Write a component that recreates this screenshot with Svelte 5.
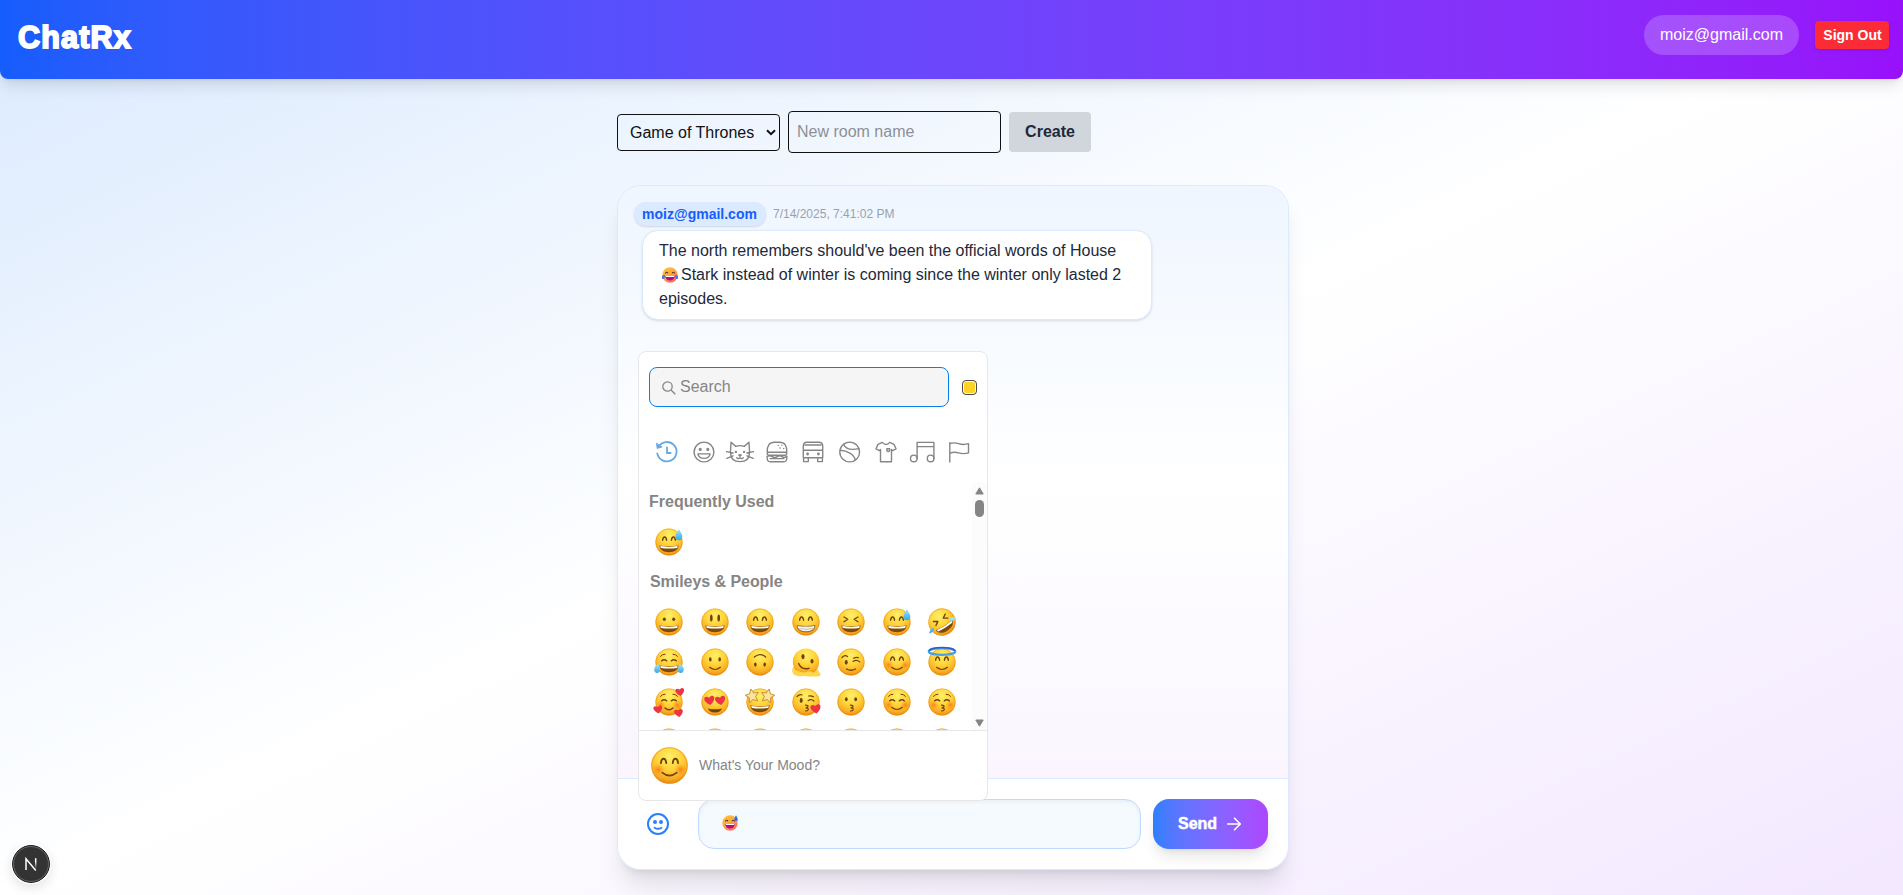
<script>
  const B = '#70410a';
  const line = (d, w = 1.5, c = B) => `<path d="${d}" fill="none" stroke="${c}" stroke-width="${w}" stroke-linecap="round" stroke-linejoin="round"/>`;
  const dots = (y, rx = 1.4, ry = 2.1, x = 4.7) => `<ellipse cx="${-x}" cy="${y}" rx="${rx}" ry="${ry}" fill="${B}"/><ellipse cx="${x}" cy="${y}" rx="${rx}" ry="${ry}" fill="${B}"/>`;
  const face = '<circle r="13.6" fill="url(#face)"/><circle r="13.2" fill="none" stroke="#e58a0b" stroke-opacity=".5" stroke-width=".9"/>';
  const grin = `<path d="M-9.6 3.6Q0 5.4 9.6 3.6C9.2 8 5.6 10.2 0 10.2S-9.2 8-9.6 3.6Z" fill="#7d4a0c"/><path d="M-8.8 4.1Q0 5.7 8.8 4.1L8.2 6Q0 7.1-8.2 6Z" fill="#fff"/>`;
  const beam = `<path d="M-9.4 3.2Q0 4.8 9.4 3.2C9.2 7.8 5.8 10.2 0 10.2S-9.2 7.8-9.4 3.2Z" fill="#8a5a18"/><path d="M-8.5 3.9Q0 5.3 8.5 3.9C8.2 7.2 5 9.2 0 9.2S-8.2 7.2-8.5 3.9Z" fill="#f4f4ee"/><path d="M-7.6 6.6Q0 8 7.6 6.6" stroke="#b9b09a" stroke-width=".8" fill="none"/>`;
  const arcs = line('M-6.4-1.8Q-6-5-4.4-5T-2.4-1.8M2.4-1.8Q2.8-5 4.4-5T6.4-1.8', 1.4);
  const closed = line('M-7.5-1.1Q-4.8-3.5-2.2-1.1M2.2-1.1Q4.8-3.5 7.5-1.1', 1.3);
  const brows = line('M-8.5-5.7Q-6.7-7.9-4-7.8M8.5-5.7Q6.7-7.9 4-7.8', 1);
  const smile = line('M-5.4 5.3Q0 9.7 5.4 5.3', 1.2);
  const blush = '<circle cx="-8.2" cy="3" r="4.7" fill="url(#blush)"/><circle cx="8.2" cy="3" r="4.7" fill="url(#blush)"/>';
  const drop = '<path d="M9.9-13C8.6-10 6.4-8 6.4-5.3A3.5 3.5 0 0 0 13.4-5.3C13.4-8 11.2-10 9.9-13Z" fill="url(#water)"/>';
  const heart = (x, y, s = 1) => `<path transform="translate(${x} ${y}) scale(${s}) rotate(-9)" d="M0 4.2C-8-1-4-6.4 0-2.6C4-6.4 8-1 0 4.2Z" fill="#ed3447"/>`;
  const kiss = line('M-.5 3.2Q3 3.5 1.6 5Q.8 5.8 0 5.8Q3 6 2 8Q1.2 9.1-.5 9', 1.2);
  const star = (x) => `<path transform="translate(${x} -6.2) rotate(${x < 0 ? -12 : 12}) scale(1.12)" d="M0-6.2L1.8-2.2L6-1.7L2.9 1.2L3.8 5.5L0 3.4L-3.8 5.5L-2.9 1.2L-6-1.7L-1.8-2.2Z" fill="#fbe3a0" stroke="#c38c32" stroke-width=".8" stroke-linejoin="round"/>`;

  const art = {
    grinning: face + dots(-2.8, 1.5, 1.8) + grin,
    smiley: face + dots(-3.9, 1.3, 3.5, 3.7) + grin,
    smile: face + arcs + grin,
    beaming: face + arcs + beam,
    laughing: face + line('M-7-5L-3.2-2.7L-7-.2M7-5L3.2-2.7L7-.2', 1.3) + grin,
    sweat: face + arcs + grin + drop,
    rofl: `<g transform="rotate(-32)">${face}${line('M-7-5L-3.2-2.7L-7-.2M7-5L3.2-2.7L7-.2', 1.4)}${grin}</g><path d="M15-4Q9-6 6.6-2.2Q10 .7 15-4ZM-12.8 11.5Q-12 6.2-8 5.5Q-7.4 10.2-12.8 11.5Z" fill="url(#water)"/>`,
    joy: face + brows + closed + grin + '<path d="M-10.6 2C-16 4-16 10.8-11.8 11C-8.5 11-8.2 6.6-10.6 2ZM10.6 2C16 4 16 10.8 11.8 11C8.5 11 8.2 6.6 10.6 2Z" fill="url(#water)"/>',
    slight: face + dots(-2.6, 1.3, 2.1) + smile,
    upside: `${face}<g transform="rotate(180)">${dots(-2.6, 1.3, 2.1)}${line('M-5.7 5Q0 9.7 5.7 5', 1.2)}</g>`,
    melting: '<path d="M-13 5C-16 12-10 14-5 12.5C-1 15 8 14.8 13 14.3C17 13 12 10 11.7 7Z" fill="#ffd54b"/><circle r="13.2" cy="-.3" fill="url(#face)"/><path d="M-13 8C-9 7-6 12 1 10C6 8 8 13 15 11.8C12 15 3 13-2 14C-7 15-15 14-13 8Z" fill="#ffd64c"/>' + '<ellipse cx="-3" cy="-5.4" rx="1.6" ry="2.6" fill="#70410a"/><ellipse cx="6" cy="-.7" rx="1.5" ry="2.3" fill="#70410a"/>' + line('M-7.4 1.6Q-4.6 8.4 3 6.3', 1.4),
    wink: face + '<ellipse cx="-4.8" cy=".3" rx="1.5" ry="2.4" fill="#70410a"/>' + line('M-9-4.5Q-6-7.8-3.4-5.4M2-.6Q5.7-2.8 8.7-.1M2.6-3.7Q5-5.1 7.6-4.3', 1.2) + line('M-4.4 7Q0 9.6 4.4 7', 1.4),
    blush: face + blush + arcs + smile,
    halo: face + arcs + smile + '<ellipse cy="-10.5" rx="13.2" ry="3.3" fill="none" stroke="#459fe6" stroke-width="2.2"/><path d="M-13-11.2C-10-15.6 10-15.6 13-11.2" fill="none" stroke="#3456cf" stroke-width="1.3"/>',
    hearts: face + blush + brows + closed + line('M-4 6Q0 9.5 4 6', 1.4) + heart(11, -10, .95) + heart(-11, 7.6, .95) + heart(9.7, 11, .95),
    heartEyes: face + '<path d="M-7 6.4Q0 8.3 7 6.4Q5.5 10.5 0 10.5T-7 6.4Z" fill="#70410a"/>' + heart(-5.4, -1.5, 1.1) + heart(5.4, -1.5, 1.1),
    starEyes: face + grin + star(-7.8) + star(7.8),
    kissHeart: face + '<ellipse cx="-4.8" cy="-1.5" rx="1.5" ry="2.4" fill="#70410a"/>' + line('M-9-5.5Q-6.5-8-4-7M2.1-1.3Q5-3.6 8-1M2.6-6Q5-6.6 7.5-5.2', 1.2) + kiss + heart(9.8, 6.9, 1.1),
    kissing: face + dots(-2.8, 1.4, 2) + kiss,
    relaxed: face + blush + brows + closed + smile,
    kissClosed: face + blush + brows + closed + kiss,
    plain: face
  };

  const rows = [
    ['grinning', 'smiley', 'smile', 'beaming', 'laughing', 'sweat', 'rofl'],
    ['joy', 'slight', 'upside', 'melting', 'wink', 'blush', 'halo'],
    ['hearts', 'heartEyes', 'starEyes', 'kissHeart', 'kissing', 'relaxed', 'kissClosed'],
    ['plain', 'plain', 'plain', 'plain', 'plain', 'plain', 'plain']
  ];

  const categories = [
    '<path d="M5.6 8.6A9.7 9.7 0 1 1 4.3 15.4M14 9.3V15H17.6"/><path d="M3.6 5.6L4.2 10.4L8.8 9Z" fill="#68a9e2" stroke-width="1"/>',
    '<circle cx="14" cy="14" r="9.9"/><circle cx="10.2" cy="11.4" r=".9"/><circle cx="17.8" cy="11.4" r=".9"/><path d="M7.9 15.9H20.1Q19.3 20.4 14 20.4T7.9 15.9Z"/>',
    '<path d="M4.4 14.2L5.1 4.3L9.8 8.4Q14 6.8 18.2 8.4L22.9 4.3L23.6 14.2Q23.5 23.6 14 23.6T4.4 14.2ZM.5 13.6L7 15M.8 20.3L7 17.8M27.5 13.6L21 15M27.2 20.3L21 17.8M10.8 19.8Q12.4 21.4 14 19.8Q15.6 21.4 17.2 19.8"/><path d="M12.8 17H15.2L14 18.3Z"/><circle cx="9.9" cy="13.9" r=".5"/><circle cx="18.1" cy="13.9" r=".5"/>',
    '<path d="M4.2 14.2Q4 4.2 11.4 4.2H16.8Q24 4.2 23.8 14.2ZM5.2 14.4Q3.2 15.8 5.2 17.2H22.8Q24.8 15.8 22.8 14.4M4 18.4Q6.8 17 9.3 18.6T14.2 18.6T19 18.6T24 18.4M4.2 19.2Q3.7 23.8 7.5 23.8H20.5Q24.3 23.8 23.8 19.2M7 20.6H21"/><path d="M15.3 7.3h.2M18.8 7.2h.2M17 10h.2M20.6 10.4h.2" stroke-width="1.3"/>',
    '<path d="M4.3 19.7V8Q4.3 4.2 8 4.2H20Q23.7 4.2 23.7 8V19.7ZM4.3 12.2H23.7M6 7H22M4.6 19.7V23.6H9.3V19.7M18.7 19.7V23.6H23.4V19.7"/><circle cx="8.6" cy="16" r=".7"/><circle cx="19.4" cy="16" r=".7"/>',
    '<circle cx="13.7" cy="14" r="9.9"/><path d="M7.5 6.3C10 11.8 16.4 12.1 22.8 10.6M4.3 12.3C11 12.8 18 16 19.3 22"/>',
    '<path d="M10.3 4.4L6 6.4L4 10.8L7.3 12.6L8.5 11.4V23.7H19.5V11.4L20.7 12.6L24 10.8L22 6.4L17.7 4.4Q14 8.6 10.3 4.4ZM14.9 10.7H17.6V12.8L16.3 13.6L14.9 12.8Z"/>',
    '<circle cx="4.8" cy="20.4" r="3.3"/><circle cx="21.6" cy="20.4" r="3.3"/><path d="M8.1 20.4V4.4H24.9V20.4M8.1 8.6H24.9"/>',
    '<path d="M4.8 24V4.8M4.8 5.5Q9.2 4.1 13.7 5.7T23.5 5.7V14.9Q18.2 16.4 13.7 14.9T4.8 15.3"/>'
  ];
</script>

{#snippet emoji(name, size)}
  <svg class="emoji" width={size} height={size} viewBox="-16 -16 32 32">{@html art[name]}</svg>
{/snippet}

{#snippet textEmoji(kind)}
  <svg class="text-emoji" width="16" height="16" viewBox="-8 -8 16 16">
    <circle r="7.7" fill="url(#warm)" />
    <path d="M-4.8-1.5Q-3.5-3.8-2-1.7M2-1.7Q3.5-3.8 4.8-1.5" fill="none" stroke="#53333b" stroke-width="1.1" />
    <path d="M-4.9 1H4.9Q4 5.5 0 5.5T-4.9 1Z" fill="#b60b80" />
    <path d="M-4.5 1H4.5L4 2H-4Z" fill="#fff" />
    {#if kind === 'joy'}
      <path d="M-5-.1C-10-.2-8.6 5-6.3 3.9Q-4.8 3-5-.1ZM5-.1C10-.2 8.6 5 6.3 3.9Q4.8 3 5-.1Z" fill="#4778e6" />
    {:else}
      <path d="M6-7.8Q3.8-4.5 4.3-3.2A1.8 1.8 0 0 0 7.8-3.2Q8-4.5 6-7.8Z" fill="#3769e8" />
    {/if}
  </svg>
{/snippet}

<svg class="defs" width="0" height="0">
  <defs>
    <radialGradient id="face" cx=".5" cy=".26" r=".77">
      <stop offset="0" stop-color="#fff06a" /><stop offset=".45" stop-color="#ffd43a" />
      <stop offset=".78" stop-color="#f9ae24" /><stop offset="1" stop-color="#e57f0a" />
    </radialGradient>
    <radialGradient id="blush"><stop stop-color="#fa5d12" stop-opacity=".65" /><stop offset="1" stop-color="#fb8b12" stop-opacity="0" /></radialGradient>
    <linearGradient id="water" x2="0" y2="1"><stop stop-color="#a5e6fb" /><stop offset="1" stop-color="#36a9e5" /></linearGradient>
    <linearGradient id="warm" x2=".6" y2="1"><stop stop-color="#ffc83d" /><stop offset=".6" stop-color="#ffa33d" /><stop offset="1" stop-color="#f8686a" /></linearGradient>
  </defs>
</svg>

<div class="page">
  <header>
    <h1>ChatRx</h1>
    <div class="account">
      <span class="user">moiz@gmail.com</span>
      <button class="signout">Sign Out</button>
    </div>
  </header>

  <main>
    <div class="rooms">
      <div class="select">
        <span>Game of Thrones</span>
        <svg width="10" height="7" viewBox="0 0 10 7"><path d="M1 1.2L5 5.2L9 1.2" fill="none" stroke="#111" stroke-width="2" /></svg>
      </div>
      <input class="room-name" placeholder="New room name" />
      <button class="create">Create</button>
    </div>

    <section class="card">
      <div class="messages">
        <div class="meta"><span class="author">moiz@gmail.com</span><time>7/14/2025, 7:41:02 PM</time></div>
        <div class="bubble">
          The north remembers should've been the official words of House<br />
          <span class="inline">{@render textEmoji('joy')}</span>Stark instead of winter is coming since the winter only lasted 2<br />
          episodes.
        </div>
      </div>

      <div class="composer">
        <button class="toggle" aria-label="Emoji">
          <svg width="24" height="24" viewBox="0 0 24 24" fill="none" stroke="#2b7fff" stroke-width="2" stroke-linecap="round">
            <circle cx="12" cy="12" r="10" /><path d="M8.5 15.7Q12 17.8 15.5 15.7" stroke-width="1.8" />
            <circle cx="9" cy="10" r="2" fill="#2b7fff" stroke="none" /><circle cx="15" cy="10" r="2" fill="#2b7fff" stroke="none" />
          </svg>
        </button>
        <div class="field">{@render textEmoji('sweat')}</div>
        <button class="send">
          <span>Send</span>
          <svg width="20" height="20" viewBox="0 0 20 20" fill="none" stroke="#fff" stroke-width="1.6" stroke-linecap="round" stroke-linejoin="round"><path d="M3.7 10H16.3M10.5 4.2L16.3 10L10.5 15.8" /></svg>
        </button>
      </div>

      <aside class="picker">
        <div class="search-row">
          <div class="search">
            <svg width="14" height="14" viewBox="0 0 14 14" fill="none" stroke="#868686" stroke-width="1.3"><circle cx="5.5" cy="5.5" r="4.7" /><path d="M9 9L13.3 13.3" /></svg>
            <span>Search</span>
          </div>
          <span class="tone"></span>
        </div>
        <nav>
          {#each categories as icon, i}
            <svg class:active={i === 0} width="28" height="28" viewBox="0 0 28 28">{@html icon}</svg>
          {/each}
        </nav>
        <div class="body">
          <div class="list">
            <h2>Frequently Used</h2>
            <div class="row">{@render emoji('sweat', 32)}</div>
            <h2 class="people">Smileys &amp; People</h2>
            {#each rows as row}
              <div class="row">
                {#each row as name}{@render emoji(name, 32)}{/each}
              </div>
            {/each}
          </div>
          <div class="scrollbar">
            <svg width="9" height="8" viewBox="0 0 9 8"><path d="M4.5 .8L8.2 7H.8Z" fill="#858585" stroke="#858585" stroke-linejoin="round" /></svg>
            <i></i>
            <svg class="down" width="9" height="8" viewBox="0 0 9 8"><path d="M4.5 7.2L8.2 1H.8Z" fill="#858585" stroke="#858585" stroke-linejoin="round" /></svg>
          </div>
        </div>
        <footer>{@render emoji('blush', 43)}<span>What's Your Mood?</span></footer>
      </aside>
    </section>
  </main>

  <div class="badge">
    <svg width="40" height="40" viewBox="0 0 40 40">
      <defs><linearGradient id="fade" gradientUnits="userSpaceOnUse" x1="0" y1="14" x2="0" y2="25"><stop offset=".3" stop-color="#fff" /><stop offset="1" stop-color="#fff" stop-opacity="0" /></linearGradient></defs>
      <circle cx="20" cy="20" r="18.4" fill="#333" stroke="#111" /><circle cx="20" cy="20" r="17.5" fill="none" stroke="#6c6c6c" stroke-width=".9" />
      <path d="M15 26V14.8L24.8 26.4" fill="none" stroke="#fff" stroke-width="1.5" /><path d="M24.7 14.2V25" fill="none" stroke="url(#fade)" stroke-width="1.5" />
    </svg>
  </div>
</div>

<style>
  :global(body) { margin: 0; overflow: hidden; }
  .defs { position: absolute; }
  .page, .page * { box-sizing: border-box; }
  .page {
    height: 895px; overflow: hidden; position: relative;
    font: 16px/24px "Liberation Sans", Arial, sans-serif; color: #1e2939;
    background: linear-gradient(to bottom right in oklab, #dbeafe, #fff 50%, #f3e8ff);
  }
  button { border: 0; margin: 0; font: inherit; padding: 0; }
  header {
    height: 79px; padding: 15px 14px 24px 17px; display: flex; justify-content: space-between; align-items: center;
    border-radius: 0 0 8px 8px; background: linear-gradient(to right in oklab, #155dfc, #9810fa);
    box-shadow: 0 10px 15px -3px #0000001a, 0 4px 6px -4px #0000001a; color: #fff;
  }
  h1 { margin: 3px 0 0 1px; font-size: 30.5px; line-height: 36px; font-weight: 700; letter-spacing: 1.2px; -webkit-text-stroke: 1.9px #fff; text-shadow: 0 1px 2px #0002; }
  .account { display: flex; align-items: center; gap: 16px; }
  .user { width: 155px; height: 40px; line-height: 40px; border-radius: 20px; background: #fff3; text-align: center; }
  .signout { width: 74px; height: 28px; padding-left: 1px; border-radius: 4px; background: #fb2c36; color: #fff; font-size: 14px; font-weight: 700; line-height: 28px; box-shadow: 0 1px 3px #0002; }
  main { width: 672px; margin: 32px 0 0 617px; }
  .rooms { height: 42px; display: flex; align-items: center; gap: 8px; }
  .select { width: 163px; height: 37px; margin-top: 1px; border: 1px solid #111; border-radius: 4px; padding: 0 3px 0 12px; display: flex; align-items: center; justify-content: space-between; color: #111; }
  .room-name { width: 213px; height: 42px; border: 1px solid #111; border-radius: 4px; padding: 0 8px; font: inherit; background: transparent; outline: 0; }
  .room-name::placeholder { color: #8c9096; }
  .create { width: 82px; height: 40px; border-radius: 4px; background: #d1d5dc; font-weight: 700; color: #1e2939; }
  .card {
    position: relative; width: 672px; height: 685px; margin-top: 32px; border: 1px solid #dbeafe; border-radius: 24px;
    display: flex; flex-direction: column; box-shadow: 0 20px 25px -5px #0000001a, 0 8px 10px -6px #0000001a;
  }
  .messages { flex: 1; border-radius: 23px 23px 0 0; padding: 16px; background: linear-gradient(to bottom in oklab, #eff6ff, #fff 50%, #faf5ff); }
  .meta { display: flex; align-items: center; height: 24px; gap: 7px; }
  .author { width: 132px; height: 24px; padding-right: 1px; border-radius: 12px; text-align: center; background: #dbeafe; color: #155dfc; font-size: 14px; font-weight: 700; box-shadow: 0 1px 2px #0002; }
  time { font-size: 12px; color: #99a1af; line-height: 22px; }
  .bubble { width: 510px; height: 90px; margin: 4px 0 0 8px; padding: 8px 16px; border: 1px solid #dbeafe; border-radius: 16px; background: #fff; box-shadow: 0 1px 3px #0000001a, 0 1px 2px -1px #0000001a; white-space: nowrap; }
  .inline { display: inline-flex; width: 22px; justify-content: center; vertical-align: -3px; }
  .text-emoji { display: block; }
  .composer { height: 91px; border-top: 1px solid #dbeafe; border-radius: 0 0 23px 23px; background: #fff; display: flex; padding: 20px; align-items: flex-start; }
  .toggle { width: 39px; height: 50px; display: flex; align-items: center; justify-content: center; background: none; }
  .field { width: 443px; height: 50px; margin-left: 21px; padding: 0 0 2px 23px; border: 1px solid #bedbff; border-radius: 16px; background: #f5faff; display: flex; align-items: center; box-shadow: inset 0 2px 4px #0000000d; }
  .send { width: 115px; height: 50px; margin-left: 12px; border-radius: 16px; background: linear-gradient(to right in oklab, #2b7fff, #ad46ff); color: #fff; display: flex; align-items: center; padding-left: 25px; gap: 7px; box-shadow: 0 10px 15px -3px #0000001a, 0 4px 6px -4px #0000001a; font-weight: 700; }
  .send span { -webkit-text-stroke: .5px #fff; width: 39px; margin-top: -1px; }
  .picker { position: absolute; left: 20px; top: 165px; width: 350px; height: 450px; border: 1px solid #e7e7e7; border-radius: 8px; background: #fff; display: flex; flex-direction: column; color: #858585; overflow: hidden; }
  .search-row { height: 70px; padding: 15px 10px; display: flex; justify-content: space-between; align-items: center; }
  .search { width: 300px; height: 40px; border: 1px solid #087fed; border-radius: 8px; background: #f5f5f5; display: flex; align-items: center; gap: 4px; padding-left: 12px; }
  .search svg { margin-top: 2px; }
  .search span { margin-top: -1px; }
  .tone { width: 15px; height: 15px; border: 1px solid #4b4b4b; border-radius: 4px; background: #ffd225; box-shadow: inset 0 0 0 1px #fff; margin-top: 1px; }
  nav { height: 60px; display: flex; justify-content: space-between; align-items: center; padding: 0 14px; }
  nav svg { fill: none; stroke: #858585; stroke-width: 1.4; stroke-linejoin: round; stroke-linecap: round; }
  nav svg.active { stroke: #68a9e2; stroke-width: 1.8; }
  .body { height: 248px; flex: none; display: flex; overflow: hidden; }
  .list { flex: 1; height: 248px; overflow: hidden; }
  h2 { font-size: 16px; line-height: 40px; height: 40px; margin: 0 0 0 10px; font-weight: 700; }
  .people { margin-left: 11px; letter-spacing: -.05px; }
  .row { height: 40px; padding-left: 14px; display: flex; align-items: center; gap: 13.5px; }
  .emoji { flex: none; display: block; overflow: visible; }
  .scrollbar { width: 15px; background: #fcfcfc; display: flex; flex-direction: column; align-items: center; padding-top: 5px; }
  .scrollbar svg { flex: none; }
  .scrollbar i { width: 9px; height: 17px; border-radius: 5px; background: #858585; margin-top: 5px; }
  .scrollbar .down { margin: auto 0 3px; }
  footer { flex: 1; border-top: 1px solid #e7e7e7; display: flex; align-items: center; padding: 0 0 1px 9px; gap: 8px; font-size: 14px; }
  footer span { margin-top: -1px; }
  .badge { position: absolute; left: 11px; top: 844px; width: 40px; height: 40px; border-radius: 50%; box-shadow: 0 4px 12px #0000001c; }
</style>
